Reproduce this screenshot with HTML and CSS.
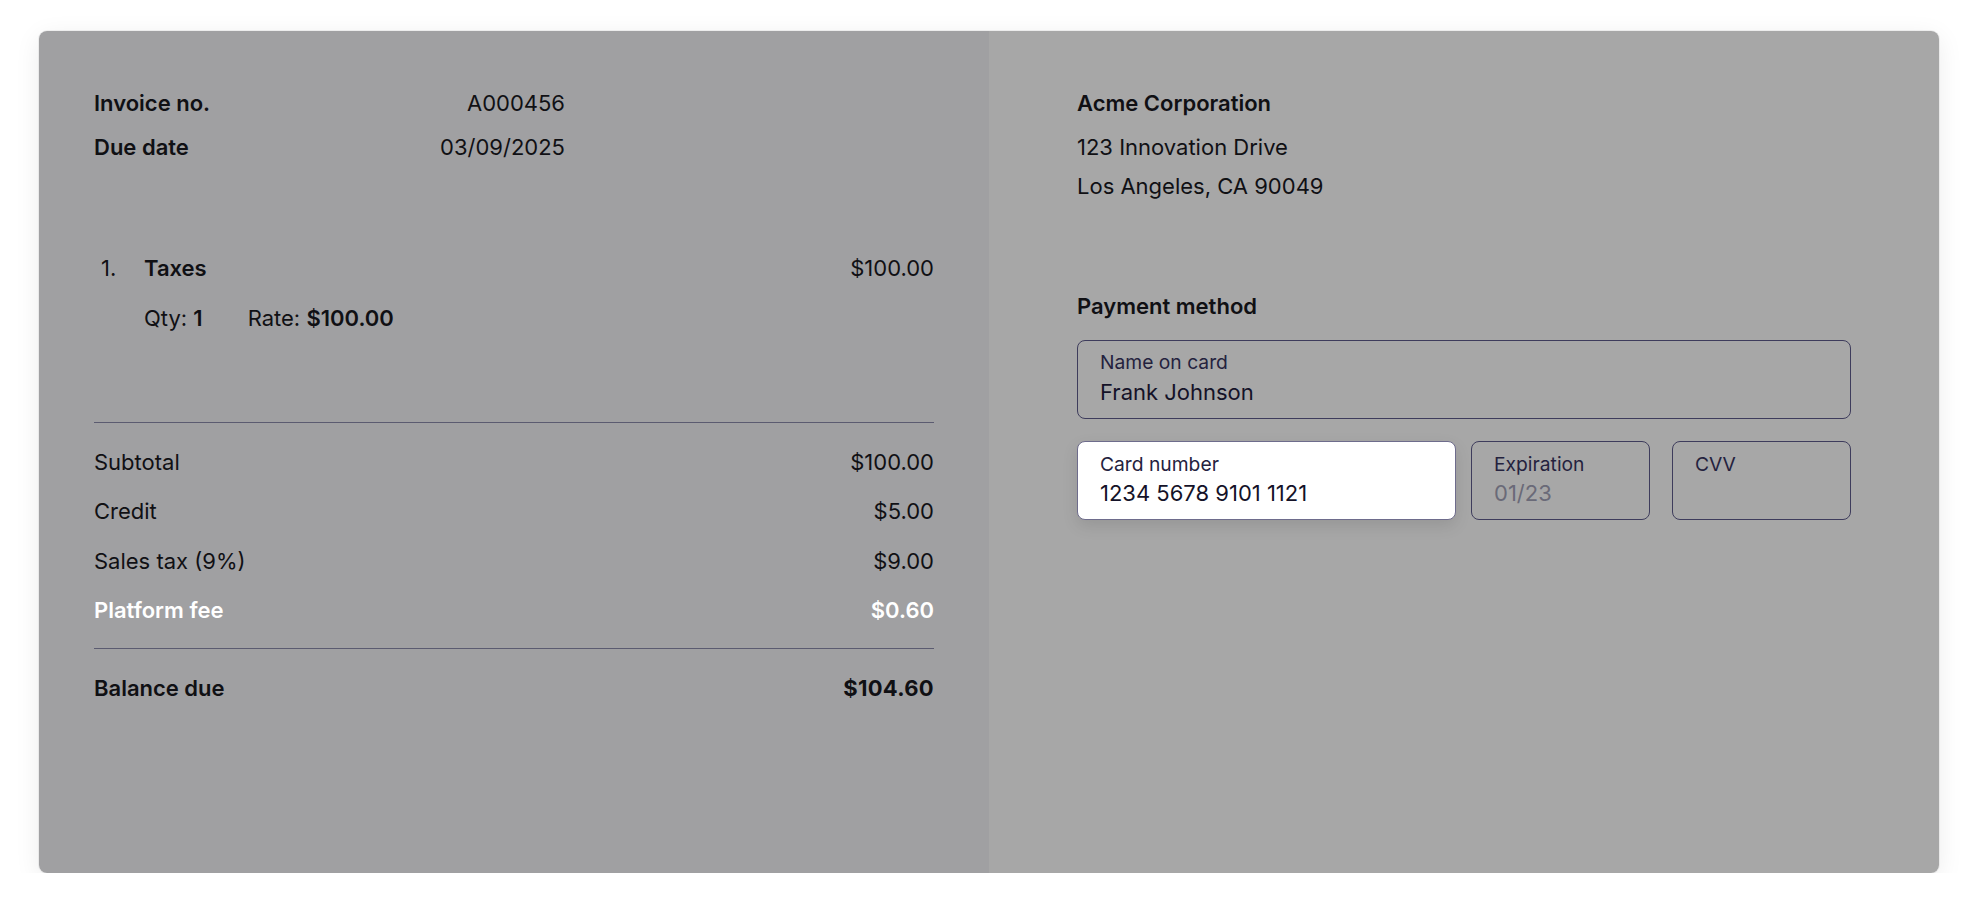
FILE: index.html
```html
<!DOCTYPE html>
<html lang="en">
<head>
<meta charset="utf-8">
<title>Invoice</title>
<link rel="stylesheet" href="styles.css">
</head>
<body>
<div class="page">
  <div class="card">
    <section class="panel panel-left">
      <div class="info">
        <div class="info-row"><span class="strong">Invoice no.</span><span>A000456</span></div>
        <div class="info-row"><span class="strong">Due date</span><span>03/09/2025</span></div>
      </div>
      <div class="item">
        <div class="item-head">
          <span class="item-num">1.</span>
          <span class="strong item-name">Taxes</span>
          <span class="item-amount">$100.00</span>
        </div>
        <div class="item-meta">
          <span>Qty: <b class="strong">1</b></span>
          <span>Rate: <b class="strong">$100.00</b></span>
        </div>
      </div>
      <div class="totals">
        <div class="total-row"><span>Subtotal</span><span>$100.00</span></div>
        <div class="total-row"><span>Credit</span><span>$5.00</span></div>
        <div class="total-row"><span>Sales tax (9%)</span><span>$9.00</span></div>
        <div class="total-row fee"><span>Platform fee</span><span>$0.60</span></div>
      </div>
      <div class="balance">
        <span class="strong">Balance due</span><span class="heavy">$104.60</span>
      </div>
    </section>
    <section class="panel panel-right">
      <div class="company">
        <div class="strong">Acme Corporation</div>
        <div class="address">
          <div>123 Innovation Drive</div>
          <div>Los Angeles, CA 90049</div>
        </div>
      </div>
      <div class="payment">
        <div class="strong">Payment method</div>
        <div class="field field-full">
          <div class="field-label">Name on card</div>
          <div class="field-value">Frank Johnson</div>
        </div>
        <div class="field-row">
          <div class="field field-card">
            <div class="field-label">Card number</div>
            <div class="field-value">1234 5678 9101 1121</div>
          </div>
          <div class="field field-exp">
            <div class="field-label">Expiration</div>
            <div class="field-value placeholder">01/23</div>
          </div>
          <div class="field field-cvv">
            <div class="field-label">CVV</div>
            <div class="field-value">&nbsp;</div>
          </div>
        </div>
      </div>
    </section>
  </div>
</div>
</body>
</html>
```

FILE: styles.css
```css
* { box-sizing: border-box; }
html, body { margin: 0; padding: 0; background: #ffffff; }
body {
  font-family: Inter, "Noto Sans", "Liberation Sans", sans-serif;
  font-size: 22px;
  line-height: 33px;
  color: #101014;
}
.page {
  padding: 31px 39px 0 39px;
}
.card {
  display: flex;
  height: 842px;
  border-radius: 8px;
  overflow: hidden;
  box-shadow: 0 0 0 1px rgba(0,0,0,0.05), 0 6px 26px rgba(0,0,0,0.08);
}
.panel { width: 50%; }
.panel-left {
  background: #a0a0a2;
  padding: 56px 55px;
}
.panel-right {
  background: #a7a7a7;
  padding: 56px 88px;
}
.strong { font-weight: 600; }
.heavy { font-weight: 700; letter-spacing: 0.3px; }

.info {
  width: 471px;
  display: flex;
  flex-direction: column;
  gap: 11px;
}
.info-row {
  display: flex;
  justify-content: space-between;
}

.item {
  margin-top: 88px;
  display: flex;
  flex-direction: column;
  gap: 16.5px;
}
.item-head { display: flex; align-items: baseline; }
.item-num { width: 50px; padding-left: 7px; }
.item-name { flex: 1; }
.item-meta {
  padding-left: 50px;
  display: flex;
  gap: 45px;
}

.totals {
  margin-top: 87px;
  border-top: 1px solid #5b5b70;
  padding-top: 23px;
  padding-bottom: 20.5px;
  display: flex;
  flex-direction: column;
  gap: 16.6px;
}
.total-row {
  display: flex;
  justify-content: space-between;
}
.fee { color: #ffffff; font-weight: 600; }
.balance {
  border-top: 1px solid #5b5b70;
  padding-top: 23px;
  display: flex;
  justify-content: space-between;
}

.address {
  margin-top: 8px;
  line-height: 38.5px;
}
.payment {
  margin-top: 85px;
}
.field {
  border: 1px solid #3e3c5c;
  border-radius: 8px;
  padding: 8.75px 22px 11px 22px;
  height: 79px;
}
.field-full { margin-top: 16.5px; }
.field-label {
  font-size: 19.25px;
  line-height: 27.5px;
  color: #24223e;
}
.field-value {
  line-height: 30px;
  color: #141228;
}
.placeholder { color: #6a6a78; }
.field-row {
  margin-top: 22.5px;
  display: flex;
}
.field-card {
  width: 379px;
  margin-right: 15px;
  background: #ffffff;
  border-color: #6e6c8c;
  box-shadow: 0 6px 16px rgba(0,0,0,0.10);
}
.field-exp { width: 179px; margin-right: 22px; }
.field-cvv { width: 179px; }
```
